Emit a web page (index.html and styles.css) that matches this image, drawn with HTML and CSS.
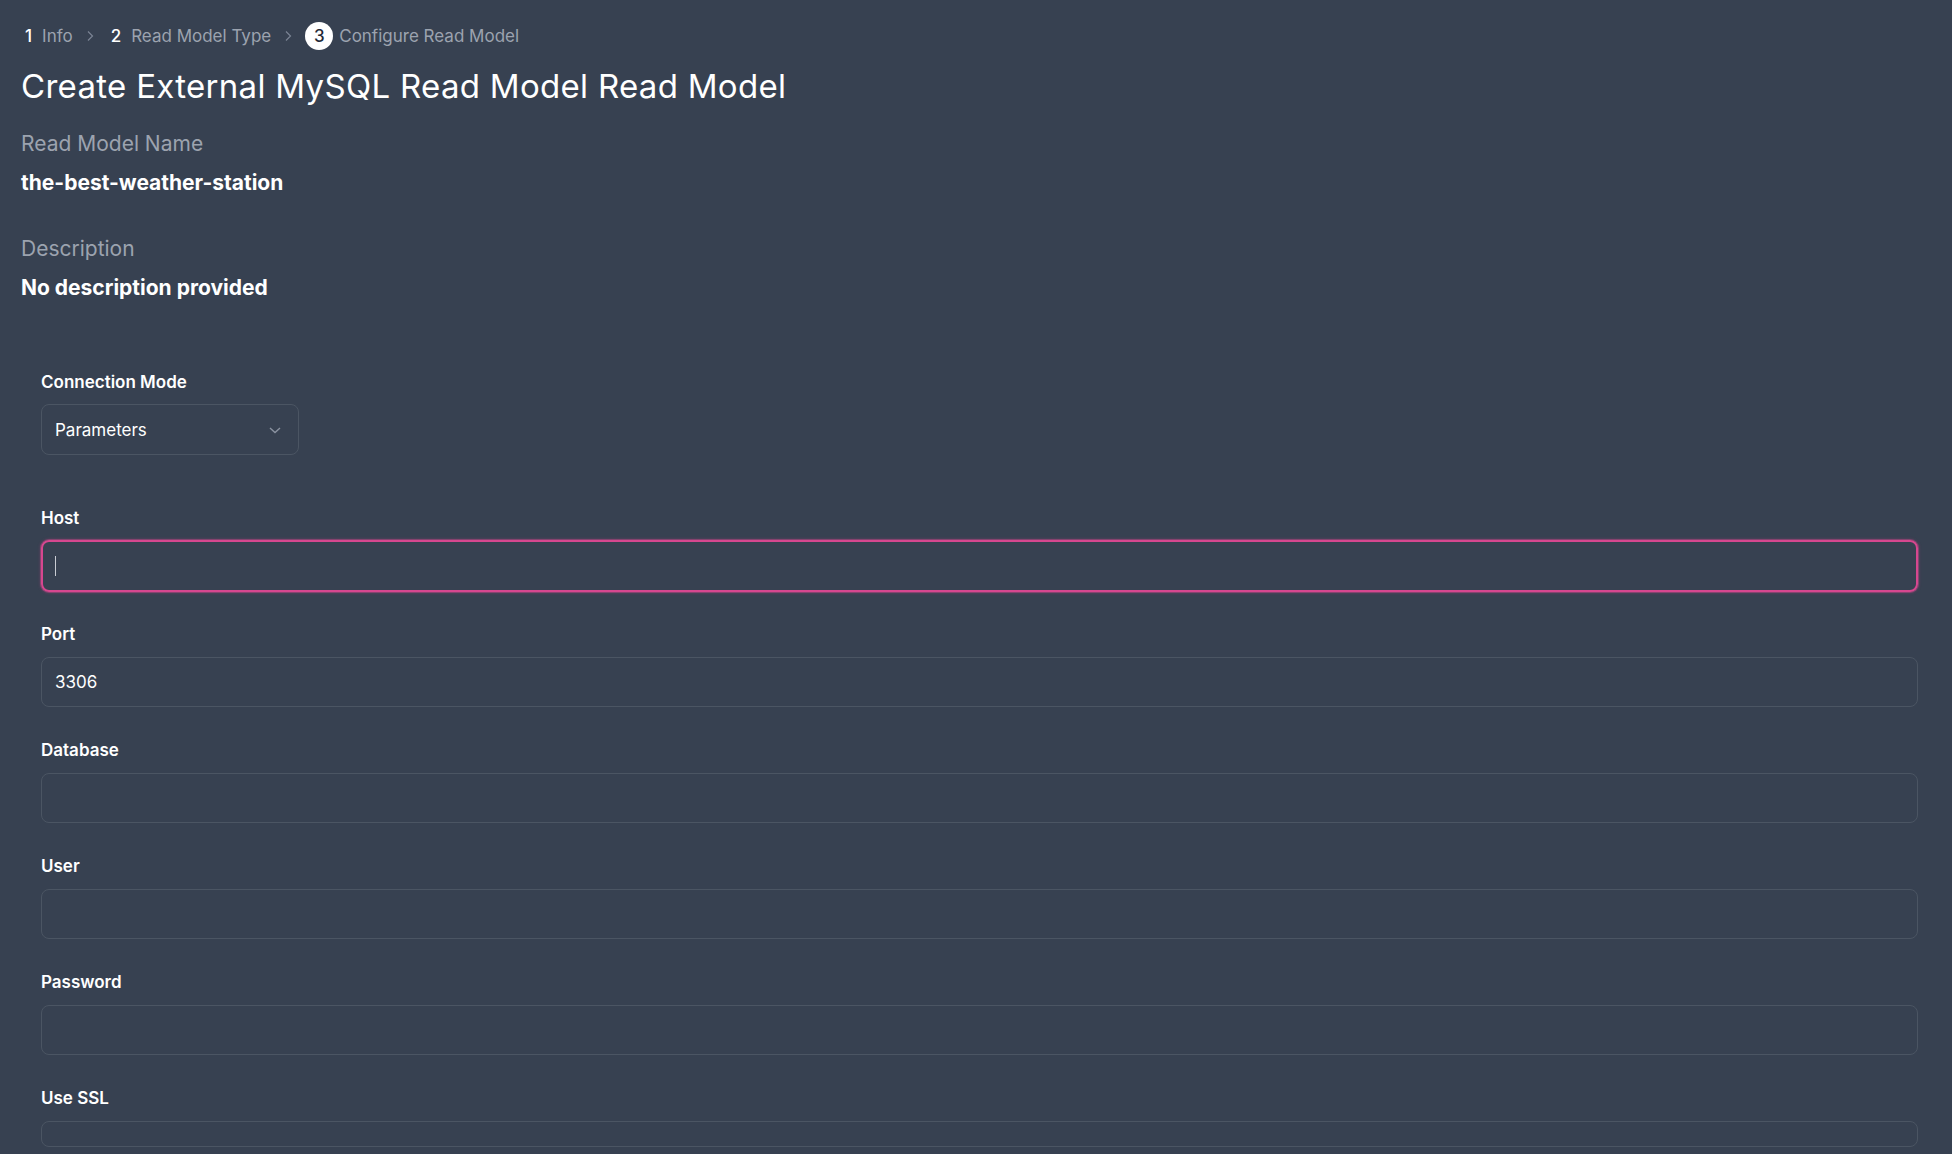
FILE: index.html
```html
<!DOCTYPE html>
<html>
<head>
<meta charset="utf-8">
<link rel="stylesheet" href="styles.css">
</head>
<body>
<div class="page">
  <nav class="crumbs">
    <span class="step"><span class="num">1</span><span class="name">Info</span></span>
    <svg class="sep" width="8" height="12" viewBox="0 0 8 12"><path d="M2 1.5l4.5 4.5L2 10.5" fill="none" stroke="#7b8494" stroke-width="1.2"/></svg>
    <span class="step"><span class="num">2</span><span class="name">Read Model Type</span></span>
    <svg class="sep" width="8" height="12" viewBox="0 0 8 12"><path d="M2 1.5l4.5 4.5L2 10.5" fill="none" stroke="#7b8494" stroke-width="1.2"/></svg>
    <span class="step cur"><span class="num current">3</span><span class="name">Configure Read Model</span></span>
  </nav>
  <h1 class="title">Create External MySQL Read Model Read Model</h1>
  <div class="info">
    <div class="info-label">Read Model Name</div>
    <div class="info-value">the-best-weather-station</div>
  </div>
  <div class="info">
    <div class="info-label">Description</div>
    <div class="info-value">No description provided</div>
  </div>

  <form class="form">
    <div class="mode">
      <label class="label">Connection Mode</label>
      <div class="select">
        <span>Parameters</span>
        <svg width="14" height="10" viewBox="0 0 14 10"><path d="M2 3l5 4.5L12 3" fill="none" stroke="#8b93a1" stroke-width="1.4"/></svg>
      </div>
    </div>
    <div class="field">
      <label class="label">Host</label>
      <div class="input focused"><span class="caret"></span></div>
    </div>
    <div class="field">
      <label class="label">Port</label>
      <div class="input">3306</div>
    </div>
    <div class="field">
      <label class="label">Database</label>
      <div class="input"></div>
    </div>
    <div class="field">
      <label class="label">User</label>
      <div class="input"></div>
    </div>
    <div class="field">
      <label class="label">Password</label>
      <div class="input"></div>
    </div>
    <div class="field">
      <label class="label">Use SSL</label>
      <div class="input short"></div>
    </div>
  </form>
</div>
</body>
</html>
```
FILE: styles.css
```css
html, body {
  margin: 0;
  padding: 0;
  background: #374151;
  height: 100%;
  overflow: hidden;
}
body {
  font-family: Inter, "Noto Sans", sans-serif;
  color: #ffffff;
}
.page {
  padding: 22px 34px 0 21px;
}
.crumbs {
  display: flex;
  align-items: center;
  height: 28px;
  font-size: 17px;
  gap: 13px;
}
.step {
  display: flex;
  align-items: center;
  gap: 10px;
}
.step.cur {
  gap: 6px;
}
.num {
  color: #ffffff;
  font-weight: 500;
  padding-left: 4px;
}
.num.current {
  background: #ffffff;
  color: #1f2937;
  width: 28px;
  height: 28px;
  border-radius: 50%;
  display: flex;
  align-items: center;
  justify-content: center;
  padding: 0;
}
.name {
  color: #9ca3af;
}
.title {
  margin: 16px 0 0;
  font-size: 33px;
  line-height: 40px;
  font-weight: 400;
  letter-spacing: 0.3px;
}
.info {
  margin-top: 24px;
}
.info + .info {
  margin-top: 38px;
}
.info-label {
  color: #9ca3af;
  font-size: 21px;
  line-height: 28px;
}
.info-value {
  margin-top: 11px;
  font-size: 21px;
  line-height: 28px;
  font-weight: 700;
}
.form {
  padding: 68px 0 0 20px;
}
.label {
  display: block;
  font-size: 17px;
  line-height: 24px;
  font-weight: 600;
}
.mode {
  margin-bottom: 51px;
}
.select {
  margin-top: 10px;
  width: 258px;
  height: 51px;
  box-sizing: border-box;
  border: 1px solid #4b5563;
  border-radius: 8px;
  display: flex;
  align-items: center;
  justify-content: space-between;
  padding: 0 16px 0 13px;
  font-size: 17px;
}
.field {
  margin-bottom: 31px;
}
.input {
  margin-top: 11px;
  height: 50px;
  box-sizing: border-box;
  border: 1px solid #4b5563;
  border-radius: 8px;
  padding: 0 13px;
  display: flex;
  align-items: center;
  font-size: 17px;
}
.input.focused {
  height: 52px;
  margin-top: 10px;
  margin-bottom: -1px;
  border: 2px solid #d6478f;
  box-shadow: 0 0 0 1px rgba(214, 71, 143, 0.4), 0 0 3px 1px rgba(214, 71, 143, 0.25);
  padding-left: 12px;
}
.caret {
  width: 1px;
  height: 20px;
  background: #c9ccd3;
}
.input.short {
  height: 26px;
}
```
